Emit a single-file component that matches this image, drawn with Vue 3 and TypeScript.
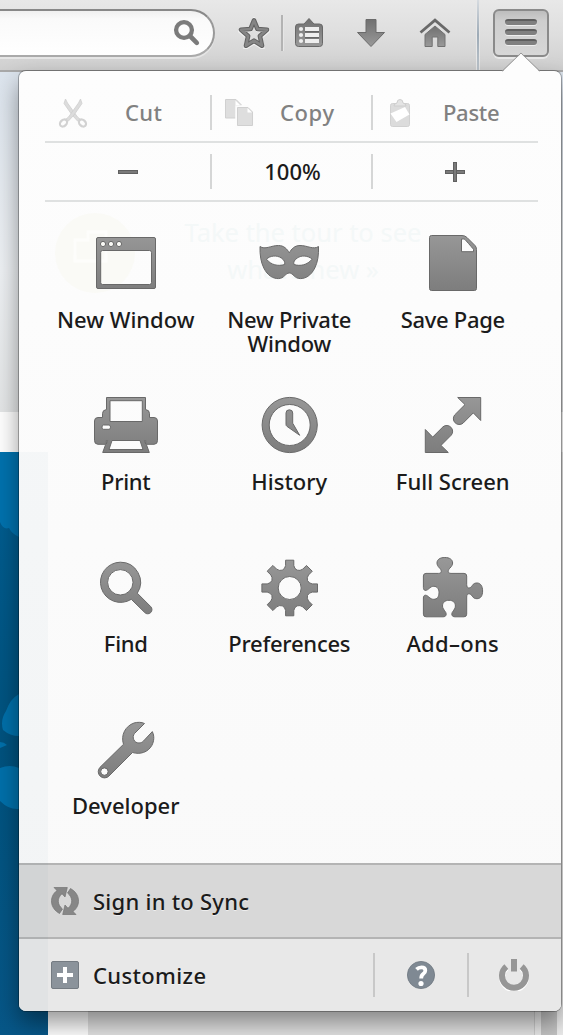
<script setup lang="ts">
interface Tile {
  id: string
  label: string
  path: string
}

function gearPath(cx: number, cy: number): string {
  const turn = (x: number, y: number, k: number): string => {
    const a = (k * Math.PI) / 4
    const px = cx + x * Math.cos(a) - y * Math.sin(a)
    const py = cy + x * Math.sin(a) + y * Math.cos(a)
    return `${px.toFixed(2)} ${py.toFixed(2)}`
  }
  let d = `M${turn(-4.1, -22.5, 0)}`
  for (let k = 0; k < 8; k++) {
    d += `L${turn(-4.1, -27.8, k)}L${turn(4.1, -27.8, k)}L${turn(4.1, -22.5, k)}`
    d += `Q${turn(4.6, -19.3, k)} ${turn(0, -19.3, k + 0.5)}`
    d += `Q${turn(-4.6, -19.3, k + 1)} ${turn(-4.1, -22.5, k + 1)}`
  }
  return d + 'Z' + ring(cx, cy, 11.5)
}

function ring(cx: number, cy: number, r: number): string {
  return `M${cx - r} ${cy}a${r} ${r} 0 1 0 ${2 * r} 0a${r} ${r} 0 1 0 ${-2 * r} 0Z`
}

const tiles: Tile[] = [
  {
    id: 'window',
    label: 'New Window',
    path:
      'M4 6.5H60Q61.5 6.5 61.5 8V56Q61.5 57.5 60 57.5H4Q2.5 57.5 2.5 56V8Q2.5 6.5 4 6.5Z' +
      'M8.5 19.5Q6.7 19.5 6.7 21.3V51.5Q6.7 53.5 8.5 53.5H55.5Q57.5 53.5 57.5 51.5V21.3Q57.5 19.5 55.5 19.5Z' +
      ring(9, 13, 2.6) + ring(17, 13, 2.6) + ring(25, 13, 2.6),
  },
  {
    id: 'private',
    label: 'New Private\nWindow',
    path:
      'M3 15.5C8 19 14 14.5 21.500 14.5C27 14.5 30 18 32.300 21.8C34.500 18 37.500 14.5 43 14.5C50.500 14.5 56.500 19 61.500 15.5C61.800 24 60.800 31 57.800 37C53.800 45 48.300 47.6 43.300 47.6C37.300 47.6 36.300 42 32.300 42C28.300 42 27.300 47.6 21.300 47.6C16.300 47.6 10.800 45 6.8 37C3.800 31 2.800 24 3 15.500Z' +
      'M9.500 28.200C13 24.500 20 24 24.300 27C27.300 29 28 31 27.700 33.500C21 35.500 14 34 9.500 28.200Z' +
      'M55.100 28.200C51.300 24.500 44.300 24 40.300 27C37.300 29 36.300 31 36.900 33.500C43.300 35.500 50.300 34 55.100 28.200Z',
  },
  {
    id: 'save',
    label: 'Save Page',
    path:
      'M10.500 4.500H41Q44 4.500 46 6.500L54 14.500Q55.500 16 55.500 18.500V57.500Q55.500 59.500 53.500 59.500H10.500Q8.500 59.500 8.500 57.500V6.500Q8.500 4.500 10.500 4.500Z' +
      'M40.500 8V20.700H52.500V18.500Q52 17.500 44 8.500Q43.500 8 42.500 8Z',
  },
  {
    id: 'print',
    label: 'Print',
    path:
      'M12.500 4.500H51.500V16.500Q55.500 17 55.500 20.500V24.500H60Q63.500 24.500 63.500 28V47.500Q63.500 51.300 60 51.300H52.300L55.300 59.500H8.700L11.700 51.300H4Q.5 51.300.5 47.500V28Q.5 24.500 4 24.500H8.500V20.500Q8.500 17 12.500 16.500Z' +
      'M16 7.700V28.500H48.300V7.700ZM9.500 32Q8 32 8 34.200Q8 36.300 9.500 36.300H15Q16.500 36.300 16.500 34.200Q16.500 32 15 32Z' +
      'M18 47.500L15 56.500H49L46 47.500ZM12.300 47.500V51L13.600 47.500ZM51.700 47.500V51L50.400 47.500Z',
  },
  {
    id: 'history',
    label: 'History',
    path:
      ring(32.7, 32, 27.6) + ring(32.7, 32, 20.5) +
      'M29 20Q29 16.800 32.400 16.800Q35.700 16.800 35.700 20V30.200L42.700 42.300L29.900 33.300Q29 32.600 29 31.500Z',
  },
  {
    id: 'fullscreen',
    label: 'Full Screen',
    path:
      'M36.700 4.500H59.700V27.500L52.300 19.900L42 30.200A5.900 5.900 0 0 1 33.700 21.900L44 11.600Z' +
      'M27.300 59.500H4.300V36.500L11.700 44.100L22 33.800A5.900 5.900 0 0 1 30.300 42.100L20 52.400Z',
  },
  {
    id: 'find',
    label: 'Find',
    path:
      'M26.300 6.200A20.100 20.100 0 1 0 37.300 43.300L50.800 56.600A4.200 4.200 0 0 0 56.700 50.600L43.300 37.200A20.100 20.100 0 0 0 26.300 6.200Z' +
      ring(26.3, 26.3, 12.7),
  },
  { id: 'preferences', label: 'Preferences', path: gearPath(32.7, 32) },
  {
    id: 'addons',
    label: 'Add–ons',
    path:
      'M5 17.400H17.500C21.500 17.400 20.500 13.800 18.500 12C16.500 10 16 8.500 16 7C16 3.500 19 1.500 23.800 1.500C28.600 1.500 31.600 3.500 31.600 7C31.600 8.500 31 10 29 12C27 13.800 26 17.400 30 17.400H43Q45.700 17.400 45.700 20V28.500C45.700 33.500 49.500 32.500 51.300 29.500C52.500 27.500 54 27 56 27C59.500 27 61.600 30 61.600 35C61.600 40 59.500 42.700 56 42.700C54 42.700 52.500 42.200 51.300 40.200C49.500 37.200 45.700 36.500 45.700 41V58.200Q45.700 60.800 43 60.800H34C30.500 60.800 30 58 31.800 55.500C33 53.800 34.400 52 34.400 50C34.400 46.500 32 44.300 28 44.300C24 44.300 21.500 46.500 21.500 50C21.500 52 23 53.800 24.200 55.500C26 58 25.500 60.800 22 60.800H5Q2.400 60.800 2.400 58.200V42C2.400 38.500 5 38.500 7.500 40.700C9.500 42.700 11 43.300 12.800 43.300C16.300 43.300 18 40.500 18 36.800C18 33 16.300 30.300 12.800 30.300C11 30.300 9.500 31 7.500 33C5 35.200 2.400 35 2.400 31.500V20Q2.400 17.400 5 17.400Z',
  },
  {
    id: 'developer',
    label: 'Developer',
    path:
      'M50.500 5.500L40.500 15.500C37.500 19 40 25.200 45 25C47 24.900 48.300 24.200 49.500 23L58.300 13.600C60.500 18 60.200 23 57.800 27.500C54 34.300 46 36.800 38.500 34.500L15 58A6.200 6.200 0 0 1 6 49.300L29.500 26.300C26.500 17 31.500 8 40 5C43.500 4 47.500 4 50.500 5.500Z' +
      ring(10.4, 53.6, 3.7),
  },
]

const syncArrow =
  'M3 .5H16.300L14 10L11 6.800C6 11 6 17.500 11.500 22L8.500 26.500C-1.500 21-2 9.500 6 3.500Z'
</script>

<template>
  <div class="screen">
    <div class="page">
      <div class="hero"></div>
      <div class="gap"></div>
      <div class="lower">
        <svg class="blue" viewBox="0 0 48 583" width="48" height="583">
          <defs>
            <linearGradient id="sea" x1="0" y1="0" x2="0" y2="1">
              <stop offset="0" stop-color="#005f93" /><stop offset=".5" stop-color="#00527e" /><stop offset="1" stop-color="#075788" />
            </linearGradient>
          </defs>
          <rect width="48" height="583" fill="url(#sea)" />
          <path d="M0 0H19V85Q12 82 9 76Q3 78 0 70Z" fill="#0072ae" />
          <path d="M19 242Q10 247 6 259Q0 268 3 278Q10 284 19 284ZM0 316Q10 312 19 316V357Q9 358 0 349ZM0 290Q4 290 7 293L0 296Z" fill="#0070aa" />
        </svg>
        <div class="paper"></div>
        <div class="grain"></div>
        <div class="edge"></div>
        <div class="scroll"></div>
      </div>
    </div>

    <header class="toolbar">
      <div class="search">
        <svg width="28" height="28" viewBox="0 0 28 28">
          <circle cx="11" cy="11" r="7.900" fill="none" stroke="#7b7b7b" stroke-width="4.300" />
          <path d="M17 17L23.800 23.800" stroke="#7b7b7b" stroke-width="4.600" stroke-linecap="round" />
        </svg>
      </div>
      <svg class="tool star" width="32" height="32" viewBox="0 0 32 32">
        <path d="M16 2.500L19.800 11.800L30 12.700L22.300 19.200L24.500 29.500L16 24.200L7.500 29.500L9.700 19.200L2 12.700L12.200 11.800Z" fill="none" stroke="#fff" stroke-opacity=".6" stroke-width="4" transform="translate(0 1.300)" />
        <path d="M16 3.500L19.500 12L29 12.800L21.900 18.900L24 28.700L16 23.700L8 28.700L10.100 18.900L3 12.800L12.500 12Z" fill="none" stroke="#626262" stroke-width="4.600" stroke-linejoin="round" />
        <path d="M16 3.500L19.500 12L29 12.800L21.900 18.900L24 28.700L16 23.700L8 28.700L10.100 18.900L3 12.800L12.500 12Z" fill="none" stroke="#858585" stroke-width="2.600" stroke-linejoin="round" />
      </svg>
      <div class="bar"></div>
      <svg class="tool list" width="32" height="32" viewBox="0 0 32 32">
        <path d="M5.500 7H11L16 1.500L21 7H26.500Q29.500 7 29.500 10V26.500Q29.500 29.500 26.500 29.500H5.500Q2.500 29.500 2.500 26.500V10Q2.500 7 5.500 7Z" fill="url(#dark)" stroke="#686868" />
        <path d="M12 12H26M12 18H26M12 24H26" stroke="#eee" stroke-width="4" />
        <path d="M12 14.700H26M12 20.700H26" stroke="#666" stroke-width="1.500" />
        <g fill="#eee"><circle cx="8" cy="12" r="2.100" /><circle cx="8" cy="18" r="2.100" /><circle cx="8" cy="24" r="2.100" /></g>
      </svg>
      <svg class="tool down" width="32" height="32" viewBox="0 0 32 32">
        <path d="M11 2.500H21V15.500H29.500L16 29.500L2.500 15.500H11Z" fill="url(#dark)" stroke="#6b6b6b" />
      </svg>
      <svg class="tool home" width="32" height="32" viewBox="0 0 32 32">
        <path d="M1.500 15.500L16 3.200L30.500 15.500" fill="none" stroke="#696969" stroke-width="2.800" />
        <path d="M6 17.500L16 9L26 17.500V29.500H18.800V20H13.200V29.500H6Z" fill="url(#dark)" stroke="#727272" />
      </svg>
      <div class="divide"></div>
      <div class="menu"><i></i><i></i><i></i></div>
    </header>

    <svg class="defs" width="0" height="0">
      <defs>
        <linearGradient id="dark" x1="0" y1="0" x2="0" y2="1">
          <stop offset="0" stop-color="#707070" /><stop offset="1" stop-color="#999" />
        </linearGradient>
        <linearGradient id="fill" gradientUnits="userSpaceOnUse" x1="0" y1="4" x2="0" y2="60">
          <stop offset="0" stop-color="#979797" /><stop offset="1" stop-color="#7d7d7d" />
        </linearGradient>
      </defs>
    </svg>

    <svg class="pointer" width="40" height="21" viewBox="0 0 40 21">
      <path d="M0 20L2 19L20 1.500L38 19L40 20V21H0Z" fill="#fdfdfd" />
      <path d="M1 19.300L20 1L39 19.300" fill="none" stroke="#999" />
    </svg>

    <div class="panel">
      <div class="ghost">
        <svg width="82" height="82" viewBox="0 0 82 82">
          <circle cx="41" cy="41" r="40" fill="#fafaf6" />
          <path d="M21 28H34V20H52V49H21Z" fill="none" stroke="#fdfdfb" stroke-width="3" />
        </svg>
        <p>Take the tour to see<br />what’s new »</p>
      </div>

      <div class="rows">
        <div class="row edit">
          <div class="cell">
            <svg width="30" height="30" viewBox="0 0 30 30">
              <path d="M7.500 1L9.500 5L19.500 19L22.500 21.500L20 23.500L14 17L6 5.500Z" fill="#dcdcdc" stroke="#cecece" stroke-width=".8" />
              <path d="M22.500 1L20.500 5L10.500 19L7.500 21.500L10 23.500L16 17L24 5.500Z" fill="#dcdcdc" stroke="#cecece" stroke-width=".8" />
              <ellipse cx="5.500" cy="25" rx="3" ry="4" transform="rotate(45 5.500 25)" fill="none" stroke="#d2d2d2" stroke-width="2.200" />
              <ellipse cx="24.500" cy="25" rx="3" ry="4" transform="rotate(-45 24.500 25)" fill="none" stroke="#d2d2d2" stroke-width="2.200" />
            </svg>
            <span class="cut">Cut</span>
          </div>
          <div class="cell">
            <svg width="30" height="30" viewBox="0 0 30 30">
              <path d="M1.500 1.500H12L17 6.500V20H1.500Z" fill="#dedede" stroke="#d0d0d0" />
              <path d="M11.500 2.500V7H16Z" fill="#fff" />
              <path d="M12.500 8.500H24L29.500 14V28.500H12.500Z" fill="#dedede" stroke="#fcfcfc" stroke-width="2.500" />
              <path d="M13.500 9.500H24L28.500 14V27.500H13.500Z" fill="#dedede" stroke="#d0d0d0" />
              <path d="M23.500 10V14.500H28Z" fill="#fff" />
            </svg>
            <span class="copy">Copy</span>
          </div>
          <div class="cell">
            <svg width="22" height="30" viewBox="0 0 22 30">
              <rect x="1.500" y="5.500" width="19" height="23" rx="2" fill="#dcdcdc" stroke="#d1d1d1" />
              <path d="M5 8Q5 5.500 8 5Q8 1.500 11 1.500Q14 1.500 14 5Q17 5.500 17 8Z" fill="#e4e4e4" stroke="#cecece" />
              <path d="M1.500 15.500L16 9L20.500 16.500L7.500 24Z" fill="#fff" />
            </svg>
            <span class="paste">Paste</span>
          </div>
        </div>
        <div class="row">
          <div class="cell mid"><div class="minus"></div></div>
          <div class="cell mid"><span class="zoom">100%</span></div>
          <div class="cell mid"><div class="minus plus"></div></div>
        </div>
      </div>

      <div class="tiles">
        <div v-for="t in tiles" :key="t.id" class="tile">
          <svg width="64" height="64" viewBox="0 0 64 64">
            <path :d="t.path" fill="url(#fill)" fill-rule="evenodd" stroke="#696969" stroke-linejoin="round" />
          </svg>
          <span :class="['label', t.id]">{{ t.label }}</span>
        </div>
      </div>

      <div class="sync">
        <svg width="28" height="28" viewBox="0 0 28 28">
          <g fill="#878787" stroke="#747474" stroke-width=".7">
            <path :d="syncArrow" />
            <path :d="syncArrow" transform="rotate(180 14 14)" />
          </g>
        </svg>
        <span>Sign in to Sync</span>
      </div>

      <div class="footer">
        <div class="customize">
          <svg width="28" height="28" viewBox="0 0 28 28">
            <rect x=".5" y=".5" width="27" height="27" rx="1.500" fill="#8b939b" stroke="#747b82" />
            <path d="M14 6V22M6 14H22" stroke="#fff" stroke-width="4" />
          </svg>
          <span>Customize</span>
        </div>
        <div class="foot help">
          <svg width="28" height="28" viewBox="0 0 28 28">
            <circle cx="14" cy="14" r="13.600" fill="#7f8993" stroke="#6f7780" stroke-width=".8" />
            <path d="M9.500 8.300Q11.500 6.300 14.500 6.300Q18.300 6.300 18.300 9.500Q18.300 11.500 16.300 12.800Q14.200 14.200 14.200 17.500" fill="none" stroke="#fff" stroke-width="3.800" />
            <circle cx="14" cy="22.500" r="2.600" fill="#fff" />
          </svg>
        </div>
        <div class="foot power">
          <svg width="32" height="32" viewBox="0 0 32 32">
            <path d="M8.300 7.500A12 12 0 1 0 23.700 7.500" fill="none" stroke="#fff" stroke-width="6" transform="translate(0 1.500)" />
            <path d="M8.300 7.500A12 12 0 1 0 23.700 7.500" fill="none" stroke="#969696" stroke-width="6" />
            <path d="M16 0V12.500" stroke="#969696" stroke-width="6" />
          </svg>
        </div>
      </div>
    </div>
  </div>
</template>

<style>
body {
  margin: 0;
}
</style>

<style scoped>
.screen {
  position: relative;
  width: 563px;
  height: 1035px;
  overflow: hidden;
  font-family: "Noto Sans", "Open Sans", sans-serif;
  font-size: 22px;
  font-weight: 500;
  color: #1b1b1b;
}
.page {
  position: absolute;
  inset: 0;
  display: flex;
  flex-direction: column;
}
.hero {
  height: 412px;
  background: linear-gradient(#dce4ed 75px, #eef1f4 270px, #e4e6e7);
}
.gap {
  height: 40px;
  background: #fff;
}
.lower {
  flex: 1;
  display: flex;
}
.blue {
  display: block;
}
.paper {
  width: 40px;
  background: #fff;
}
.grain {
  width: 446px;
  background: #e3e3e3;
}
.edge {
  width: 6px;
  border-left: 1px solid #ccc;
  background: #e9e9e9;
}
.scroll {
  flex: 1;
  background: linear-gradient(90deg, #c4c4c4 16px, #ececec 16px);
}
.toolbar {
  position: relative;
  display: flex;
  height: 70px;
  background: linear-gradient(#e8e8e8, #dedede 35px, #cfcfcf);
  border-bottom: 2px solid #a9a9a9;
}
.search {
  box-sizing: border-box;
  width: 215px;
  height: 48px;
  margin-top: 9px;
  border: 2px solid #999;
  border-top-color: #888;
  border-left: 0;
  border-bottom-color: #aaa;
  border-radius: 0 24px 24px 0;
  background: linear-gradient(#f0f0f0, #fafafa 8px, #fff);
  box-shadow: 0 2px 0 #e6e6e6;
  display: flex;
  justify-content: flex-end;
}
.search svg {
  margin: 8px 12px 0 0;
}
.tool {
  margin-top: 17px;
  flex: none;
}
.star {
  margin-left: 23px;
}
.bar {
  width: 2px;
  height: 36px;
  margin: 15px 10px 0 11px;
  background: #b3b3b3;
  box-shadow: 1px 0 0 #e6e6e6;
}
.list {
  margin-right: 30px;
}
.down {
  margin-right: 32px;
}
.divide {
  width: 2px;
  height: 70px;
  margin-left: 26px;
  background: linear-gradient(#d6dbe0, #9daab6 50%, #bcc4cb);
  box-shadow: -1px 0 0 #e8e8e8, 1px 0 0 #e6e6e6;
}
.menu {
  box-sizing: border-box;
  width: 56px;
  height: 48px;
  margin: 9px 0 0 14px;
  padding-top: 8px;
  border: 2px solid #8a8a8a;
  border-radius: 6px;
  background: linear-gradient(#bdbdbd, #cecece 10px, #d7d7d7);
  box-shadow: 0 2px 0 #e9e9e9;
  display: flex;
  flex-direction: column;
  align-items: center;
  gap: 4px;
}
.menu i {
  box-sizing: border-box;
  width: 32px;
  height: 6px;
  border-radius: 3px;
  background: #808080;
  border-top: 2px solid #5e5e5e;
  box-shadow: 0 1px 0 #eee;
}
.defs {
  position: absolute;
}
.pointer {
  position: absolute;
  left: 501px;
  top: 52px;
  z-index: 2;
}
.panel {
  position: absolute;
  left: 19px;
  top: 71px;
  width: 542px;
  height: 940px;
  border-radius: 7px;
  overflow: hidden;
  background: linear-gradient(#fdfdfd, #fbfbfb 50%, #f9f9f9);
  display: flex;
  flex-direction: column;
  box-shadow: 0 0 0 1px rgba(0, 0, 0, 0.28), 0 12px 24px rgba(0, 0, 0, 0.42);
}
.panel::before {
  content: "";
  position: absolute;
  left: 0;
  top: 381px;
  width: 29px;
  bottom: 0;
  background: rgba(0, 70, 110, 0.027);
  z-index: 3;
}
.ghost {
  position: absolute;
  left: 35px;
  top: 141px;
  display: flex;
  color: #f4f8f8;
  font-size: 25.5px;
  font-weight: 400;
  line-height: 37px;
  text-align: center;
}
.ghost p {
  width: 250px;
  margin: 2px 0 0 42px;
  white-space: nowrap;
}
.rows {
  position: relative;
  width: 493px;
  margin-left: 26px;
  padding-top: 13px;
}
.row {
  height: 57px;
  border-bottom: 2px solid #dfe1e1;
  display: grid;
  grid-template-columns: 167px 161px 165px;
  align-items: center;
}
.cell {
  height: 35px;
  display: flex;
  align-items: center;
}
.cell span {
  margin-top: -2px;
}
.cell + .cell {
  box-sizing: border-box;
  border-left: 2px solid #d5d6d6;
  margin-left: -2px;
}
.cell.mid {
  justify-content: center;
}
.cell.mid:first-child,
.cell.mid:last-child {
  padding-right: 2px;
}
.edit {
  color: #818181;
}
.edit .cell:first-child svg {
  margin-left: 13px;
}
.edit .cell:nth-child(2) svg {
  margin-left: 12px;
}
.edit .cell:nth-child(3) svg {
  margin-left: 16px;
}
.cut {
  margin-left: 37px;
  letter-spacing: 0.4px;
}
.copy {
  margin-left: 26px;
  letter-spacing: 0.6px;
}
.paste {
  margin-left: 32px;
  letter-spacing: -0.3px;
}
.minus {
  position: relative;
  box-sizing: border-box;
  width: 20px;
  height: 4px;
  border: 1px solid #606060;
  background: #7a7a7a;
}
.plus::after {
  content: "";
  position: absolute;
  left: 7px;
  top: -9px;
  width: 2px;
  height: 18px;
  border: 1px solid #606060;
  background: #7a7a7a;
}
.tiles {
  position: relative;
  display: grid;
  grid-template-columns: repeat(3, 163.5px);
  grid-auto-rows: 162.3px;
  margin: 29px 0 0 25px;
  height: 632px;
  flex: none;
}
.tile {
  display: flex;
  flex-direction: column;
  align-items: center;
}
.tile svg {
  display: block;
  flex: none;
  overflow: visible;
}
.label {
  margin-top: 12px;
  white-space: pre;
  text-align: center;
  line-height: 24px;
}
.private,
.preferences {
  letter-spacing: -0.25px;
}
.save {
  letter-spacing: -0.3px;
}
.find,
.print {
  letter-spacing: -0.3px;
}
.addons {
  letter-spacing: 0.3px;
}
.find,
.preferences,
.addons,
.developer {
  margin-top: 11px;
}
.sync {
  box-sizing: border-box;
  height: 76px;
  border-top: 2px solid #b4b4b4;
  border-bottom: 2px solid #b4b4b4;
  background: #d8d8d8;
  display: flex;
  align-items: center;
  padding-left: 32px;
  letter-spacing: 0.25px;
  text-shadow: 0 1px 0 #eee;
}
.sync span,
.customize span {
  margin-left: 14px;
}
.footer {
  flex: 1;
  background: #e8e8e8;
  display: flex;
  align-items: center;
}
.customize {
  width: 354px;
  display: flex;
  align-items: center;
  box-sizing: border-box;
  padding-left: 32px;
  letter-spacing: 0.35px;
  text-shadow: 0 1px 0 #f5f5f5;
}
.foot {
  box-sizing: border-box;
  height: 44px;
  width: 94px;
  border-left: 2px solid #c8c8c8;
  display: flex;
  align-items: center;
  justify-content: center;
}
.power {
  padding-right: 2px;
}
</style>
